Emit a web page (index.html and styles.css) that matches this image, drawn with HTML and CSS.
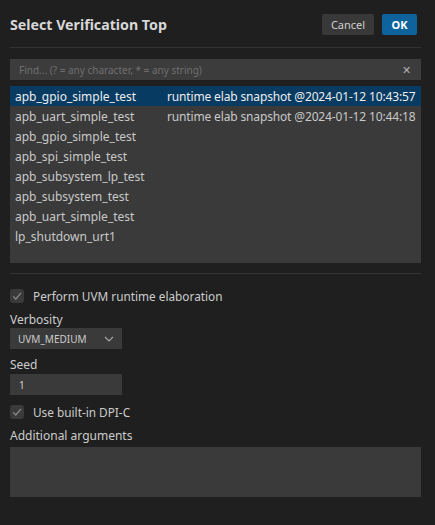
FILE: index.html
```html
<!DOCTYPE html>
<html>
<head>
<meta charset="utf-8">
<link rel="stylesheet" href="styles.css">
</head>
<body>
<div class="dialog">
  <div class="header">
    <div class="title">Select Verification Top</div>
    <div class="actions">
      <button class="btn btn-secondary">Cancel</button>
      <button class="btn btn-primary">OK</button>
    </div>
  </div>
  <div class="sep"></div>
  <div class="search">
    <span class="placeholder">Find... (? = any character, * = any string)</span>
    <span class="clear">✕</span>
  </div>
  <div class="list">
    <div class="row selected"><span class="name">apb_gpio_simple_test</span><span class="desc">runtime elab snapshot @2024-01-12 10:43:57</span></div>
    <div class="row"><span class="name">apb_uart_simple_test</span><span class="desc">runtime elab snapshot @2024-01-12 10:44:18</span></div>
    <div class="row"><span class="name">apb_gpio_simple_test</span></div>
    <div class="row"><span class="name">apb_spi_simple_test</span></div>
    <div class="row"><span class="name">apb_subsystem_lp_test</span></div>
    <div class="row"><span class="name">apb_subsystem_test</span></div>
    <div class="row"><span class="name">apb_uart_simple_test</span></div>
    <div class="row"><span class="name">lp_shutdown_urt1</span></div>
  </div>
  <div class="sep sep2"></div>
  <div class="check">
    <span class="box"><svg width="14" height="14" viewBox="0 0 14 14"><path d="M3.2 7.4 L5.8 10 L11 3.8" fill="none" stroke="#8a8a8a" stroke-width="1.2"/></svg></span>
    <span class="check-label">Perform UVM runtime elaboration</span>
  </div>
  <div class="label">Verbosity</div>
  <div class="select">
    <span>UVM_MEDIUM</span>
    <svg width="10" height="6" viewBox="0 0 10 6"><path d="M1 1 L5 5 L9 1" fill="none" stroke="#a8a8a8" stroke-width="1.1"/></svg>
  </div>
  <div class="label label-seed">Seed</div>
  <div class="input">1</div>
  <div class="check check2">
    <span class="box"><svg width="14" height="14" viewBox="0 0 14 14"><path d="M3.2 7.4 L5.8 10 L11 3.8" fill="none" stroke="#8a8a8a" stroke-width="1.2"/></svg></span>
    <span class="check-label">Use built-in DPI-C</span>
  </div>
  <div class="label">Additional arguments</div>
  <div class="textarea"></div>
</div>
</body>
</html>
```
FILE: styles.css
```css
html, body {
  margin: 0;
  padding: 0;
  background: #1f1f1f;
}
body {
  font-family: "Noto Sans", "Open Sans", sans-serif;
  color: #cccccc;
  width: 435px;
  height: 525px;
  overflow: hidden;
}
.dialog {
  padding: 14px 14px 0 10px;
  display: flex;
  flex-direction: column;
}
.header {
  display: flex;
  align-items: center;
  justify-content: space-between;
  height: 21px;
  padding-right: 4px;
}
.title {
  font-size: 14.2px;
  font-weight: bold;
  color: #d8d8d8;
}
.actions {
  display: flex;
  gap: 8px;
}
.btn {
  border: none;
  border-radius: 2px;
  height: 21px;
  font-family: inherit;
  font-size: 11px;
  padding: 0;
  color: #e0e0e0;
}
.btn-secondary {
  width: 52px;
  background: #383838;
  color: #cfcfcf;
}
.btn-primary {
  width: 35px;
  background: #0e639c;
  color: #ffffff;
  font-weight: bold;
}
.sep {
  height: 1px;
  background: #333333;
  margin-top: 12px;
}
.search {
  margin-top: 11px;
  height: 21px;
  background: #3c3c3c;
  display: flex;
  align-items: center;
  justify-content: space-between;
  padding: 0 10px 0 9px;
  font-size: 10px;
}
.placeholder {
  color: #6f6f6f;
}
.clear {
  color: #b0b0b0;
  font-size: 11px;
}
.list {
  margin-top: 6px;
  height: 177px;
  background: #3a3a3a;
  display: flex;
  flex-direction: column;
}
.row {
  height: 20px;
  display: flex;
  align-items: center;
  padding-left: 5px;
  font-size: 12px;
  color: #c8c8c8;
}
.row.selected {
  background: #073b62;
  color: #ededed;
}
.name {
  width: 152px;
  flex: none;
}
.desc {
  white-space: nowrap;
  letter-spacing: -0.15px;
}
.sep2 {
  margin-top: 10px;
}
.check {
  display: flex;
  align-items: center;
  gap: 9px;
  margin-top: 14px;
  height: 15px;
}
.box {
  width: 14px;
  height: 14px;
  background: #3a3a3a;
  border-radius: 3px;
  display: block;
}
.box svg {
  display: block;
}
.check-label {
  font-size: 11.8px;
  color: #cccccc;
}
.label {
  font-size: 12px;
  color: #cccccc;
  margin-top: 9px;
  height: 16px;
  line-height: 16px;
}
.label-seed {
  margin-top: 8px;
}
.select {
  margin-top: 0;
  width: 112px;
  height: 21px;
  box-sizing: border-box;
  background: #3a3a3a;
  display: flex;
  align-items: center;
  justify-content: space-between;
  padding: 0 8px 0 8px;
  font-size: 10px;
  color: #cccccc;
}
.input {
  margin-top: 1px;
  width: 112px;
  height: 21px;
  box-sizing: border-box;
  background: #3a3a3a;
  display: flex;
  align-items: center;
  padding-left: 9px;
  font-size: 10px;
  color: #d0d0d0;
}
.check2 {
  margin-top: 9px;
}
.textarea {
  margin-top: 3px;
  height: 50px;
  background: #3a3a3a;
}
```
